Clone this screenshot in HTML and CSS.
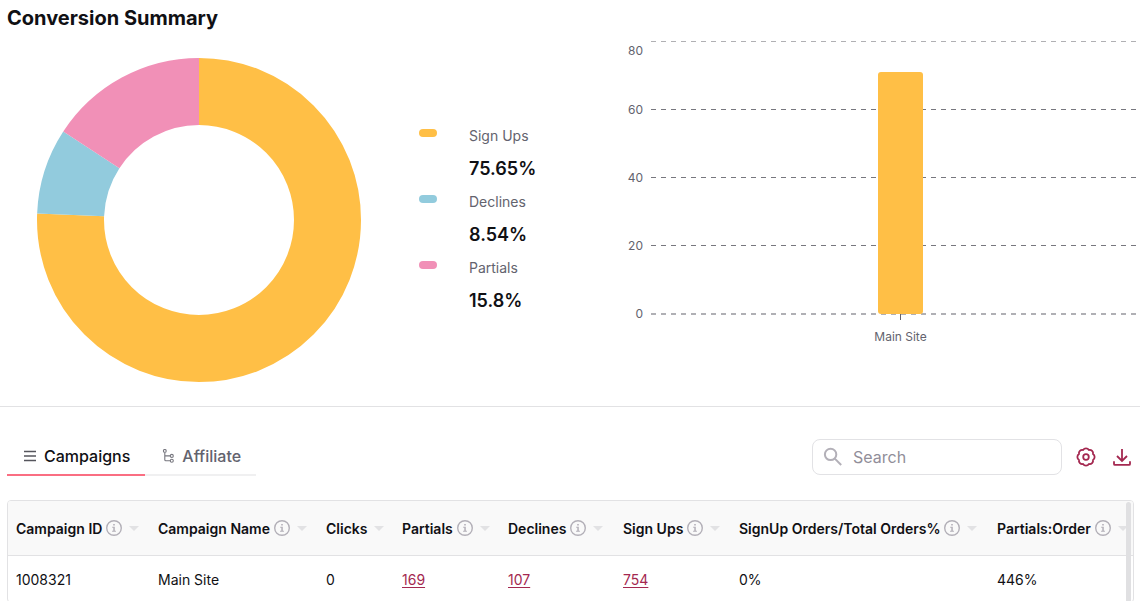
FILE: index.html
```html
<!DOCTYPE html>
<html lang="en">
<head>
  <meta charset="UTF-8">
  <meta name="viewport" content="width=device-width, initial-scale=1">
  <title>Conversion Summary</title>
  <link rel="stylesheet" href="styles.css">
</head>
<body>

<svg class="sprite" aria-hidden="true">
  <symbol id="info" viewBox="0 0 16 16">
    <circle cx="8" cy="8" r="7.3" fill="none" stroke="currentColor" stroke-width="1.4"/>
    <path d="M7.2 4.1h1.6v1.5H7.2zM6.2 6.8h2.6v4h1.1v.9H6.1v-.9h1.2V7.7H6.2z" fill="currentColor"/>
  </symbol>
</svg>

<section class="summary">
  <h2>Conversion Summary</h2>
  <div class="charts">
    <svg class="donut" viewBox="0 0 324 324" role="img" aria-label="Conversion breakdown">
      <g fill="none" stroke-width="67" transform="rotate(-90 162 162)">
        <circle cx="162" cy="162" r="128.5" pathLength="100" stroke="#ffbf46" stroke-dasharray="75.65 24.35"/>
        <circle cx="162" cy="162" r="128.5" pathLength="100" stroke="#92cbdd" stroke-dasharray="8.54 91.46" stroke-dashoffset="-75.65"/>
        <circle cx="162" cy="162" r="128.5" pathLength="100" stroke="#f190b7" stroke-dasharray="15.81 84.19" stroke-dashoffset="-84.19"/>
      </g>
    </svg>

    <dl class="legend">
      <div class="legend-item signups"><dt>Sign Ups</dt><dd>75.65%</dd></div>
      <div class="legend-item declines"><dt>Declines</dt><dd>8.54%</dd></div>
      <div class="legend-item partials"><dt>Partials</dt><dd>15.8%</dd></div>
    </dl>

    <svg class="bars" viewBox="0 0 520 324" role="img" aria-label="Sign ups by campaign">
      <g class="grid">
        <path class="light" d="M31 3.5H516"/>
        <path d="M31 71.5H516"/>
        <path d="M31 139.5H516"/>
        <path d="M31 207.5H516"/>
        <path class="base" d="M31 276H516"/>
      </g>
      <rect x="258" y="34" width="45" height="242" rx="3" fill="#ffbf46"/>
      <path d="M280.5 276v6" stroke="#63636e"/>
      <g class="axis" text-anchor="end">
        <text x="23" y="17">80</text>
        <text x="23" y="76">60</text>
        <text x="23" y="144">40</text>
        <text x="23" y="212">20</text>
        <text x="23" y="280">0</text>
      </g>
      <text class="axis" x="280.5" y="303" text-anchor="middle">Main Site</text>
    </svg>
  </div>
</section>

<section class="report">
  <div class="toolbar">
    <nav class="tabs">
      <button type="button" class="tab active">
        <svg width="14" height="14" viewBox="0 0 14 14"><path d="M2 2.5h12M2 7h12M2 11.5h12" stroke="#55555c" stroke-width="1.6"/></svg>
        Campaigns
      </button>
      <button type="button" class="tab">
        <svg width="14" height="14" viewBox="0 0 14 14" fill="none" stroke="#77777f" stroke-width="1.1"><circle cx="4.8" cy="1.9" r="1.4"/><path d="M4.8 3.4v7.3q0 1 1 1h4.4M4.8 6.9h5.4"/><circle cx="11.8" cy="6.9" r="1.5"/><circle cx="11.8" cy="11.7" r="1.5"/></svg>
        Affiliate
      </button>
    </nav>

    <div class="tools">
      <label class="search">
        <svg width="20" height="20" viewBox="0 0 20 20" fill="none" stroke="#b3b0b8" stroke-width="2"><circle cx="7.6" cy="7.4" r="5.7"/><path d="M11.8 11.6l6.4 6.4"/></svg>
        <input type="text" placeholder="Search" aria-label="Search">
      </label>
      <button type="button" class="icon-btn" aria-label="Settings">
        <svg width="20" height="20" viewBox="0 0 20 20" fill="none" stroke="currentColor" stroke-width="1.8" stroke-linejoin="round"><path d="M7.1 3A3.4 3.4 0 0 1 12.9 3A3.4 3.4 0 0 1 17 7.1A3.4 3.4 0 0 1 17 12.9A3.4 3.4 0 0 1 12.9 17A3.4 3.4 0 0 1 7.1 17A3.4 3.4 0 0 1 3 12.9A3.4 3.4 0 0 1 3 7.1A3.4 3.4 0 0 1 7.1 3z"/><circle cx="10" cy="10" r="2.8"/></svg>
      </button>
      <button type="button" class="icon-btn" aria-label="Download">
        <svg width="20" height="20" viewBox="0 0 20 20" fill="none" stroke="currentColor" stroke-width="1.8"><path d="M10 2v11.5M5 9l5 5 5-5M2 14.3v2.6q0 1 1 1h14q1 0 1-1v-2.6"/></svg>
      </button>
    </div>
  </div>

  <div class="table-wrap">
    <table>
      <colgroup>
        <col class="c-id"><col class="c-name"><col class="c-clicks"><col class="c-partials">
        <col class="c-declines"><col class="c-signups"><col class="c-orders"><col class="c-ratio">
      </colgroup>
      <thead>
        <tr>
          <th><div class="head">Campaign ID<svg class="info"><use href="#info"/></svg><i class="sort"></i></div></th>
          <th><div class="head">Campaign Name<svg class="info"><use href="#info"/></svg><i class="sort"></i></div></th>
          <th><div class="head">Clicks<i class="sort"></i></div></th>
          <th><div class="head">Partials<svg class="info"><use href="#info"/></svg><i class="sort"></i></div></th>
          <th><div class="head">Declines<svg class="info"><use href="#info"/></svg><i class="sort"></i></div></th>
          <th><div class="head">Sign Ups<svg class="info"><use href="#info"/></svg><i class="sort"></i></div></th>
          <th><div class="head">SignUp Orders/Total Orders%<svg class="info"><use href="#info"/></svg><i class="sort"></i></div></th>
          <th><div class="head">Partials:Order<svg class="info"><use href="#info"/></svg><i class="sort"></i></div></th>
        </tr>
      </thead>
      <tbody>
        <tr>
          <td>1008321</td>
          <td>Main Site</td>
          <td>0</td>
          <td><a href="#">169</a></td>
          <td><a href="#">107</a></td>
          <td><a href="#">754</a></td>
          <td>0%</td>
          <td>446%</td>
        </tr>
      </tbody>
    </table>
    <div class="scroll-thumb"></div>
  </div>
</section>

</body>
</html>
```
FILE: styles.css
```css
* {
  box-sizing: border-box;
}

body {
  margin: 0;
  height: 100vh;
  overflow: hidden;
  background-color: #fff;
  color: #101014;
  font-family: Inter, sans-serif;
  font-size: 14px;
}

button, input {
  font: inherit;
}

.sprite {
  display: block;
  width: 0;
  height: 0;
}

.summary {
  padding: 4px 0 24px 7px;
  border-bottom: 1px solid #e2e2e4;
}

h2 {
  margin: 0;
  font-size: 20px;
  font-weight: 700;
  line-height: 28px;
}

.charts {
  display: flex;
  align-items: flex-start;
  padding: 6px 0 0 30px;
}

.donut {
  flex: none;
  width: 324px;
  margin-top: 20px;
}

.legend {
  flex: none;
  width: 201px;
  margin: 81px 0 0 58px;
}

.legend-item {
  position: relative;
  padding-left: 50px;
  line-height: 33px;
}

.legend-item::before {
  content: "";
  position: absolute;
  top: 10px;
  left: 0;
  width: 18px;
  height: 8px;
  border-radius: 4px;
}

.signups::before {
  background-color: #ffbf46;
}

.declines::before {
  background-color: #92cbdd;
}

.partials::before {
  background-color: #f190b7;
}

.legend dt {
  color: #63636e;
}

.legend dd {
  margin: 0;
  font-size: 18px;
  font-weight: 600;
}

.bars {
  flex: 1;
  min-width: 0;
}

.grid path {
  stroke: #77777e;
  stroke-dasharray: 5 5;
}

.grid .light {
  stroke: #b0b0b3;
}

.grid .base {
  stroke: #b0b0b5;
  stroke-width: 2;
}

.axis {
  fill: #63636e;
  font-size: 12px;
}

.report {
  padding: 32px 6px 0 7px;
}

.toolbar {
  display: flex;
  justify-content: space-between;
  height: 37px;
}

.tabs {
  display: flex;
}

.tab {
  display: flex;
  align-items: center;
  gap: 8px;
  padding: 0 15px 2px;
  border: none;
  border-bottom: 2px solid #f0f0f1;
  background: none;
  color: #63636e;
  font-size: 16px;
  font-weight: 500;
  cursor: pointer;
}

.tab.active {
  border-bottom-color: #fa6e82;
  color: #101014;
}

.tools {
  display: flex;
  align-items: center;
  gap: 14px;
  height: 36px;
  padding-right: 2px;
}

.search {
  display: flex;
  align-items: center;
  gap: 10px;
  width: 250px;
  height: 36px;
  padding: 0 10px;
  border: 1px solid #e2e2e5;
  border-radius: 8px;
}

.search input {
  flex: 1;
  min-width: 0;
  padding: 0;
  border: none;
  outline: none;
  font-size: 16px;
}

.search input::placeholder {
  color: #918e99;
}

.icon-btn {
  display: flex;
  padding: 0;
  border: none;
  background: none;
  color: #a42850;
  cursor: pointer;
}

.icon-btn + .icon-btn {
  margin-left: 2px;
}

.table-wrap {
  position: relative;
  margin-top: 24px;
  border: 1px solid #e2e2e4;
  border-radius: 4px;
  overflow: hidden;
}

table {
  width: 100%;
  border-collapse: separate;
  border-spacing: 0;
  table-layout: fixed;
}

.c-id { width: 142px; }
.c-name { width: 168px; }
.c-clicks { width: 76px; }
.c-partials { width: 106px; }
.c-declines { width: 115px; }
.c-signups { width: 116px; }
.c-orders { width: 258px; }

th, td {
  padding: 0 0 0 8px;
  text-align: left;
  white-space: nowrap;
}

th {
  height: 55px;
  background-color: #f9f9f9;
  border-bottom: 1px solid #e2e2e4;
  font-weight: 600;
}

td {
  height: 46px;
}

td a {
  color: #a42850;
  text-underline-offset: 2px;
}

.head {
  display: flex;
  align-items: center;
}

.info {
  flex: none;
  width: 16px;
  height: 16px;
  margin-left: 4px;
  color: #b3b0b8;
}

.sort {
  margin-left: 7px;
  border: 5px solid transparent;
  border-top-color: #e2e2e4;
  border-bottom: none;
}

/* overlay scrollbar */
.scroll-thumb {
  position: absolute;
  top: 1px;
  right: 2px;
  bottom: 0;
  width: 5px;
  border-radius: 3px 3px 0 0;
  background-color: #e0e0e2;
}
```
